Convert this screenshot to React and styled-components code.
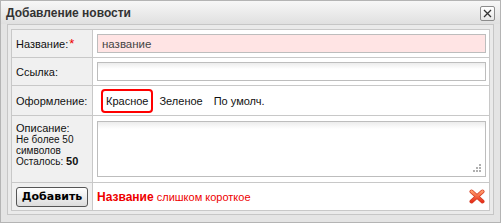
import styled, { createGlobalStyle } from "styled-components";

const GlobalStyle = createGlobalStyle`
  html, body {
    margin: 0;
    padding: 0;
    background: #ffffff;
  }
  body {
    font-family: "Liberation Sans", Arial, sans-serif;
  }
`;

const Window = styled.div`
  width: 501px;
  height: 223px;
  box-sizing: border-box;
  border: 1px solid #b4b4b4;
  background: #e4e4e4;
  display: flex;
  flex-direction: column;
`;

const TitleBar = styled.div`
  height: 23px;
  flex: none;
  display: flex;
  align-items: center;
  justify-content: space-between;
  padding: 0 5px 0 5px;
  background: linear-gradient(#f7f7f7, #e0e0e0);
`;

const Title = styled.span`
  font-family: "Liberation Sans", Arial, sans-serif;
  font-weight: bold;
  font-size: 12px;
  color: #333333;
`;

const CloseButton = styled.button`
  width: 15px;
  height: 15px;
  margin-top: 1px;
  padding: 0;
  box-sizing: border-box;
  border: 1px solid #8c8c8c;
  border-radius: 2px;
  background: linear-gradient(#ffffff, #e6e6e6);
  display: flex;
  align-items: center;
  justify-content: center;
`;

const Body = styled.div`
  flex: 1;
  padding: 0 6px 7px 6px;
  display: flex;
`;

const Panel = styled.div`
  flex: 1;
  border: 1px solid #c6c6c6;
  background: #eaeaea;
  padding: 4px 3px 3px 3px;
`;

const FormGrid = styled.div`
  display: grid;
  grid-template-columns: 80px 1fr;
  grid-template-rows: 27px 27px 29px 66px 27px;
  gap: 1px;
  padding: 1px;
  background: #c8c8c8;
`;

const LabelCell = styled.div`
  background: #f0f0f0;
  padding: ${(p) => (p.$top ? "6px 0 0 4px" : "0 0 0 4px")};
  display: flex;
  flex-direction: column;
  justify-content: ${(p) => (p.$top ? "flex-start" : "center")};
  font-size: 11px;
  color: #111111;
`;

const ValueCell = styled.div`
  background: #ffffff;
  padding: 0 3px 0 4px;
  display: flex;
  align-items: center;
`;

const Required = styled.span`
  color: #ee0000;
  font-size: 13px;
  margin-left: 1px;
`;

const TextInput = styled.input`
  width: 100%;
  height: 19px;
  box-sizing: border-box;
  border: 1px solid #bdbdbd;
  padding: 0 4px;
  font-family: "Liberation Sans", Arial, sans-serif;
  font-size: 11.5px;
  color: #444444;
  outline: none;
  background: ${(p) =>
    p.$error ? "#ffe4e4" : "linear-gradient(#ececec, #ffffff 6px)"};
`;

const Options = styled.div`
  display: flex;
  align-items: center;
  margin-left: 4px;
`;

const Option = styled.span`
  padding: 4px 3px;
  border: 2px solid ${(p) => (p.$active ? "#ff0000" : "transparent")};
  border-radius: 4px;
  margin-right: 1px;
  font-size: 11px;
  color: #111111;
`;

const DescLabel = styled.span`
  font-size: 11px;
  line-height: 12px;
`;

const DescNote = styled.span`
  font-size: 10px;
  line-height: 11px;
  b {
    font-size: 11px;
  }
`;

const TextArea = styled.div`
  position: relative;
  width: 100%;
  height: 56px;
  box-sizing: border-box;
  border: 1px solid #bdbdbd;
  background: linear-gradient(#ececec, #ffffff 7px);
`;

const Grip = styled.svg`
  position: absolute;
  right: 4px;
  bottom: 4px;
`;

const SubmitCell = styled.div`
  background: #f0f0f0;
  padding: 0 0 0 4px;
  display: flex;
  align-items: center;
`;

const SubmitButton = styled.button`
  width: 72px;
  height: 20px;
  padding: 0;
  box-sizing: border-box;
  border: 1px solid #555555;
  border-radius: 3px;
  background: linear-gradient(#ffffff, #dcdcdc);
  font-family: "DejaVu Sans", Verdana, sans-serif;
  font-weight: bold;
  font-size: 11px;
  color: #000000;
`;

const ErrorRow = styled.div`
  flex: 1;
  display: flex;
  align-items: center;
  justify-content: space-between;
  padding-right: 1px;
`;

const ErrorText = styled.span`
  font-size: 11px;
  color: #ee0000;
  b {
    font-size: 12px;
    font-weight: bold;
  }
`;

const CrossIcon = () => (
  <svg width="16" height="15" viewBox="0 0 16 15">
    <defs>
      <linearGradient id="xg" x1="0" y1="0" x2="0" y2="1">
        <stop offset="0" stopColor="#ff9a6a" />
        <stop offset="1" stopColor="#e8311c" />
      </linearGradient>
    </defs>
    <path
      d="M2.5 2.5 L13.5 12.5 M13.5 2.5 L2.5 12.5"
      stroke="#d23a22"
      strokeWidth="4"
      strokeLinecap="round"
    />
    <path
      d="M2.5 2.5 L13.5 12.5 M13.5 2.5 L2.5 12.5"
      stroke="url(#xg)"
      strokeWidth="2.6"
      strokeLinecap="round"
    />
  </svg>
);

export default function App() {
  return (
    <>
      <GlobalStyle />
      <Window>
        <TitleBar>
          <Title>Добавление новости</Title>
          <CloseButton type="button" aria-label="close">
            <svg width="9" height="9" viewBox="0 0 9 9">
              <path d="M1 1 L8 8 M8 1 L1 8" stroke="#333" strokeWidth="1.3" />
            </svg>
          </CloseButton>
        </TitleBar>
        <Body>
          <Panel>
            <FormGrid>
              <LabelCell>
                <span>
                  Название:<Required>*</Required>
                </span>
              </LabelCell>
              <ValueCell>
                <TextInput $error defaultValue="название" />
              </ValueCell>

              <LabelCell>Ссылка:</LabelCell>
              <ValueCell>
                <TextInput />
              </ValueCell>

              <LabelCell>Оформление:</LabelCell>
              <ValueCell>
                <Options>
                  <Option $active>Красное</Option>
                  <Option>Зеленое</Option>
                  <Option>По умолч.</Option>
                </Options>
              </ValueCell>

              <LabelCell $top>
                <DescLabel>Описание:</DescLabel>
                <DescNote>Не более 50</DescNote>
                <DescNote>символов</DescNote>
                <DescNote>
                  Осталось: <b>50</b>
                </DescNote>
              </LabelCell>
              <ValueCell>
                <TextArea>
                  <Grip width="8" height="8" viewBox="0 0 8 8">
                    <g fill="#b0b0b0">
                      <rect x="6" y="0" width="2" height="2" />
                      <rect x="3" y="3" width="2" height="2" />
                      <rect x="6" y="3" width="2" height="2" />
                      <rect x="0" y="6" width="2" height="2" />
                      <rect x="3" y="6" width="2" height="2" />
                      <rect x="6" y="6" width="2" height="2" />
                    </g>
                  </Grip>
                </TextArea>
              </ValueCell>

              <SubmitCell>
                <SubmitButton type="button">Добавить</SubmitButton>
              </SubmitCell>
              <ValueCell>
                <ErrorRow>
                  <ErrorText>
                    <b>Название</b> слишком короткое
                  </ErrorText>
                  <CrossIcon />
                </ErrorRow>
              </ValueCell>
            </FormGrid>
          </Panel>
        </Body>
      </Window>
    </>
  );
}
